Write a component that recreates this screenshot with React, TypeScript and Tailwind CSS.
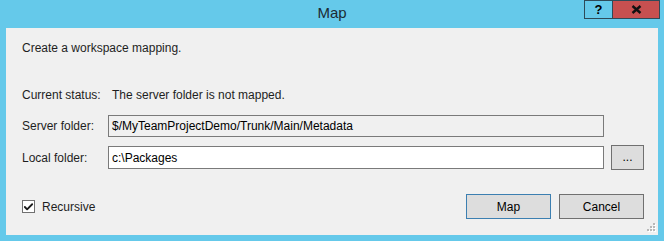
import { Check } from "lucide-react";

const font = { fontFamily: '"Liberation Sans", Arial, sans-serif' };

function CaptionButtons() {
  return (
    <div className="flex h-[19px] self-start">
      <div className="flex w-[29px] items-center justify-center border border-[#2e4a58] bg-[#65c9ea] text-[13px] font-bold leading-none text-black">
        ?
      </div>
      <div className="flex w-[47px] items-center justify-center border border-l-0 border-[#2e4a58] bg-[#c75050]">
        <svg width="11" height="9" viewBox="0 0 11 9">
          <path d="M1.5 1 L9.5 8 M9.5 1 L1.5 8" stroke="#111" strokeWidth="2.4" />
        </svg>
      </div>
    </div>
  );
}

function Field({ label, value, readOnly }: { label: string; value: string; readOnly?: boolean }) {
  return (
    <div className="flex items-center">
      <span className="w-[86px] text-[12px] text-[#1e1e1e]">{label}</span>
      <div
        className={`flex h-[22px] w-[496px] items-center border border-[#7a7a7a] px-[3px] text-[12px] text-black ${
          readOnly ? "bg-[#f0f0f0]" : "h-[23px] bg-white"
        }`}
      >
        {value}
      </div>
    </div>
  );
}

export default function App() {
  return (
    <div className="flex h-[241px] w-[664px] flex-col bg-[#65c9ea]" style={font}>
      <div className="grid h-[28px] grid-cols-[1fr_auto_1fr] px-[4px]">
        <div />
        <div className="flex items-center pb-[2px] text-[15px] text-[#1c2b33]">Map</div>
        <div className="flex justify-end">
          <CaptionButtons />
        </div>
      </div>

      <div className="relative mx-[6px] flex h-[207px] flex-col bg-[#f0f0f0] pl-[16px] pr-[14px] text-[12px] text-[#1e1e1e]">
        <div className="mt-[12px] h-[16px] leading-[16px]">Create a workspace mapping.</div>

        <div className="mt-[31px] flex h-[16px] items-center leading-[16px]">
          <span className="w-[86px]">Current status:</span>
          <span className="pl-[4px]">The server folder is not mapped.</span>
        </div>

        <div className="mt-[12px]">
          <Field label="Server folder:" value="$/MyTeamProjectDemo/Trunk/Main/Metadata" readOnly />
        </div>

        <div className="mt-[8px] flex h-[25px] items-center gap-[7px]">
          <Field label="Local folder:" value="c:\Packages" />
          <button className="flex h-[25px] w-[33px] items-center justify-center border border-[#707070] bg-[#dddddd] pb-[2px] text-[12px] text-black">
            ...
          </button>
        </div>

        <div className="mt-[24px] flex h-[25px] items-center">
          <div className="flex items-center gap-[7px]">
            <div className="flex h-[13px] w-[13px] items-center justify-center border border-[#707070] bg-white">
              <Check size={12} strokeWidth={4} className="text-[#1a1a1a]" />
            </div>
            <span>Recursive</span>
          </div>
          <div className="ml-auto flex gap-[8px]">
            <button className="h-[25px] w-[85px] border border-[#3c7fb1] bg-[#dddddd] text-[12px] text-black">
              Map
            </button>
            <button className="h-[25px] w-[85px] border border-[#707070] bg-[#dddddd] text-[12px] text-black">
              Cancel
            </button>
          </div>
        </div>

        <svg className="absolute bottom-[3px] right-[2px]" width="10" height="10" viewBox="0 0 10 10">
          {[
            [7, 1],
            [4, 4],
            [7, 4],
            [1, 7],
            [4, 7],
            [7, 7],
          ].map(([x, y]) => (
            <g key={`${x}-${y}`}>
              <rect x={x + 1} y={y + 1} width="2" height="2" fill="#ffffff" />
              <rect x={x} y={y} width="2" height="2" fill="#b8b8b8" />
            </g>
          ))}
        </svg>
      </div>
    </div>
  );
}
